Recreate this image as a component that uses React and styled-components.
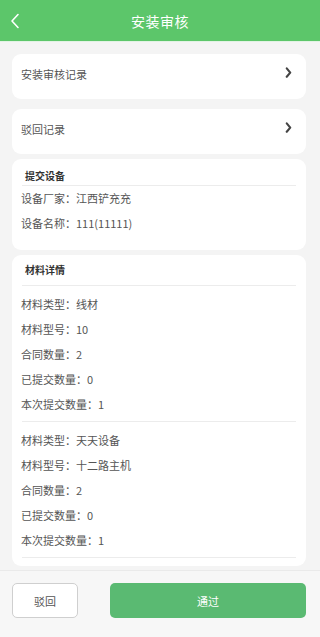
import styled, { createGlobalStyle } from 'styled-components';

const GlobalStyle = createGlobalStyle`
	html, body {
		margin: 0;
		padding: 0;
		background: #f4f4f4;
		font-family: 'Noto Sans CJK SC', 'Noto Sans', sans-serif;
	}
`;

const device = [
	{ label: '设备厂家', value: '江西铲充充' },
	{ label: '设备名称', value: '111(11111)' },
];

const materials = [
	[
		{ label: '材料类型', value: '线材' },
		{ label: '材料型号', value: '10' },
		{ label: '合同数量', value: '2' },
		{ label: '已提交数量', value: '0' },
		{ label: '本次提交数量', value: '1' },
	],
	[
		{ label: '材料类型', value: '天天设备' },
		{ label: '材料型号', value: '十二路主机' },
		{ label: '合同数量', value: '2' },
		{ label: '已提交数量', value: '0' },
		{ label: '本次提交数量', value: '1' },
	],
];

const Chevron = ({ color = '#444', size = 7, left }) => (
	<svg width={size} height={size * 1.6} viewBox="0 0 10 16" fill="none">
		<path
			d={left ? 'M8 1.5 L2 8 L8 14.5' : 'M2.5 2 L7.5 8 L2.5 14'}
			stroke={color}
			strokeWidth={left ? 1.6 : 3}
			strokeLinecap="round"
			strokeLinejoin="round"
		/>
	</svg>
);

export default function App() {
	return (
		<Page>
			<GlobalStyle />
			<Header>
				<Back>
					<Chevron color="#fff" size={10} left />
				</Back>
				<Title>安装审核</Title>
			</Header>
			<Content>
				<LinkCard $mb={5}>
					<LinkText>安装审核记录</LinkText>
					<Chevron />
				</LinkCard>
				<LinkCard>
					<LinkText>驳回记录</LinkText>
					<Chevron />
				</LinkCard>
				<Card $pb={14}>
					<CardTitle>提交设备</CardTitle>
					<Divider />
					{device.map((item) => (
						<Row key={item.label}>
							{item.label}：{item.value}
						</Row>
					))}
				</Card>
				<Card $pb={8} $pt={8}>
					<CardTitle $mb={8}>材料详情</CardTitle>
					<Divider />
					{materials.map((group, i) => (
						<Group key={i}>
							{group.map((item) => (
								<Row key={item.label}>
									{item.label}：{item.value}
								</Row>
							))}
							<Divider $mt={4} />
						</Group>
					))}
				</Card>
				<Card $pb={40} />
			</Content>
			<Footer>
				<RejectButton>驳回</RejectButton>
				<PassButton>通过</PassButton>
			</Footer>
		</Page>
	);
}

const Page = styled.div`
	display: flex;
	flex-direction: column;
	height: 100vh;
	background: #f4f4f4;
	overflow: hidden;
`;

const Header = styled.div`
	position: relative;
	flex: none;
	display: flex;
	align-items: center;
	justify-content: center;
	height: 41px;
	background: #5cc66a;
	border-bottom: 1px solid #e2f3e4;
`;

const Back = styled.div`
	position: absolute;
	left: 10px;
	top: 13px;
	display: flex;
`;

const Title = styled.div`
	color: #fff;
	font-size: 14px;
	letter-spacing: 0.5px;
`;

const Content = styled.div`
	flex: 1;
	overflow: hidden;
	display: flex;
	flex-direction: column;
	gap: 5px;
	padding: 12px 14px 0 12px;
`;

const LinkCard = styled.div`
	display: flex;
	align-items: flex-start;
	justify-content: space-between;
	height: 45px;
	padding: 13px 14px 0 9px;
	box-sizing: border-box;
	background: #fff;
	border-radius: 9px;
	margin-bottom: ${(p) => p.$mb || 0}px;
	flex: none;
`;

const LinkText = styled.div`
	font-size: 11px;
	color: #555;
	line-height: 14px;
`;

const Card = styled.div`
	flex: none;
	background: #fff;
	border-radius: 9px;
	padding: ${(p) => p.$pt || 10}px 10px ${(p) => p.$pb}px;
`;

const CardTitle = styled.div`
	font-size: 10px;
	font-weight: 700;
	color: #333;
	padding-left: 3px;
	line-height: 14px;
	margin-bottom: ${(p) => p.$mb || 2}px;
`;

const Divider = styled.div`
	height: 1px;
	background: #ececec;
	margin-top: ${(p) => p.$mt || 0}px;
`;

const Group = styled.div`
	display: flex;
	flex-direction: column;
	padding-top: 6px;
`;

const Row = styled.div`
	font-size: 11px;
	color: #555;
	line-height: 25px;
	margin-left: -1px;
`;

const Footer = styled.div`
	flex: none;
	display: flex;
	gap: 32px;
	height: 67px;
	padding: 12px 14px 0 12px;
	box-sizing: border-box;
	background: #f7f7f7;
	border-top: 1px solid #eaeaea;
`;

const RejectButton = styled.button`
	width: 66px;
	height: 35px;
	border: 1.5px solid #cfcfcf;
	border-radius: 5px;
	background: #fff;
	color: #555;
	font-family: inherit;
	font-size: 11px;
`;

const PassButton = styled.button`
	flex: 1;
	height: 35px;
	border: none;
	border-radius: 5px;
	background: #5aba72;
	color: #fff;
	font-family: inherit;
	font-size: 11px;
`;
